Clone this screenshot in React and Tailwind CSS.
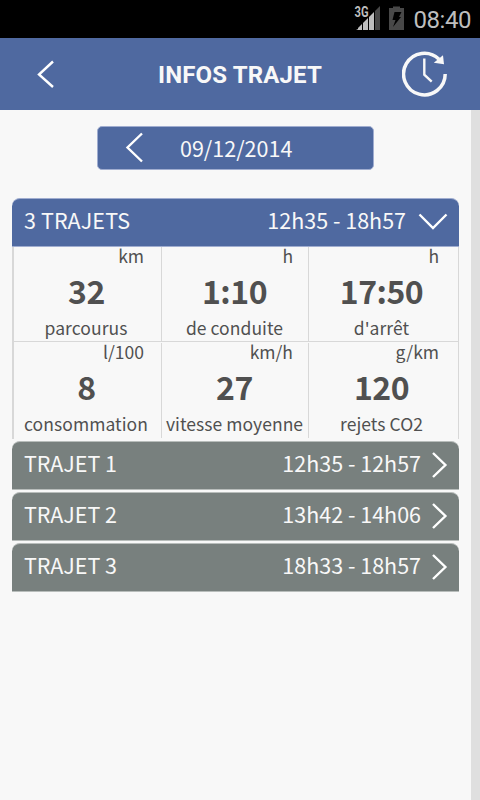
import React from "react";

const stats = [
  [
    { unit: "km", value: "32", label: "parcourus" },
    { unit: "h", value: "1:10", label: "de conduite" },
    { unit: "h", value: "17:50", label: "d'arrêt" },
  ],
  [
    { unit: "l/100", value: "8", label: "consommation" },
    { unit: "km/h", value: "27", label: "vitesse moyenne" },
    { unit: "g/km", value: "120", label: "rejets CO2" },
  ],
];

const trips = [
  { name: "TRAJET 1", time: "12h35 - 12h57" },
  { name: "TRAJET 2", time: "13h42 - 14h06" },
  { name: "TRAJET 3", time: "18h33 - 18h57" },
];

// Right padding of the unit, value and label in each column
const columns = [
  { unit: "pr-[17px]", value: "pr-[2px]", label: "pr-[3px]" },
  { unit: "pr-[15px]", value: "pr-px", label: "pr-px" },
  { unit: "pr-[19px]", value: "pr-1", label: "pr-1" },
];

const Chevron = ({ points, className, strokeWidth = 2.4 }) => (
  <svg className={className} fill="none" stroke="#fff" strokeWidth={strokeWidth}>
    <polyline points={points} />
  </svg>
);

const StatusBar = () => (
  <div className="flex h-[38px] justify-end bg-black pr-[9px] font-['Roboto',sans-serif]">
    {/* Signal strength */}
    <svg width="28" height="38" className="mr-[7px]">
      <path d="M26 6V30H21V11Z" fill="#484848" />
      <path d="M20 12V30H15V17Z" fill="#bebebe" />
      <path d="M14 18V30H9V23Z" fill="#bebebe" />
      <path d="M8 24V30H4V28Z" fill="#bebebe" />
      <path d="M4 29V30H2Z" fill="#bebebe" />
      <text x="0.5" y="17" fontSize="14" fontWeight="700" fill="#bebebe" textLength="14" lengthAdjust="spacingAndGlyphs">
        3G
      </text>
    </svg>
    {/* Battery */}
    <svg width="16" height="38" className="mr-[8px]">
      <path d="M0 8H4V6.5H11V8H15V30H0Z" fill="#484848" />
      <path d="M5.5 12H12.5L10 17H12L4 27L6.5 20H3.5Z" fill="#000" />
    </svg>
    <span className="text-[24px] leading-[40px] tracking-[-0.45px] text-[#bebebe]">08:40</span>
  </div>
);

const Header = () => (
  <div className="flex h-[72px] items-center bg-[#4f69a0] pr-[30px] pl-[36px]">
    <Chevron className="h-[30px] w-[20px]" points="17,2.5 3,15.5 17,28" />
    <h1 className="flex-1 pt-px pl-[22px] text-center font-['Roboto',sans-serif] text-[24px] leading-[72px] font-bold tracking-[0.15px] text-[#f8f8f8]">
      INFOS TRAJET
    </h1>
    <svg width="48" height="48" fill="none" stroke="#f8f8f8">
      <path d="M37 9.2A20.8 20.8 0 1 0 43.2 24" strokeWidth="3.5" />
      <path d="M41 5.3L42 14.3L31.8 12.7Z" fill="#f8f8f8" stroke="none" />
      <path d="M22.3 8.5V24.7L29.7 31.7" strokeWidth="2.4" />
    </svg>
  </div>
);

const StatCell = ({ unit, value, label, column }) => (
  <div className="flex h-[95px] flex-col text-[#505050]">
    <p className={`text-right text-[17.5px] leading-[18px] ${column.unit}`}>{unit}</p>
    <p className={`text-center text-[32px] leading-[50px] font-bold tracking-[-0.5px] ${column.value}`}>{value}</p>
    <p className={`text-center text-[17.5px] leading-[26px] tracking-[0.05px] whitespace-nowrap ${column.label}`}>
      {label}
    </p>
  </div>
);

const App = () => {
  return (
    <div className="flex h-[800px] w-[480px] flex-col overflow-hidden bg-[#f8f8f8] font-['Noto_Sans_CJK_JP',sans-serif]">
      <StatusBar />
      <Header />

      <div className="flex flex-1">
        <main className="w-[471px] pt-4 pr-3 pl-3">
          {/* Date picker */}
          <div className="ml-[85px] flex h-[44px] w-[277px] items-center rounded-[5px] border border-[#a0add0] bg-[#4f69a0] pl-[27px] text-[#f8f8f8]">
            <Chevron className="h-[32px] w-[20px]" points="17,1.5 2.5,15.5 17,29.5" />
            <span className="pl-[35px] text-[21.5px] leading-[42px]">09/12/2014</span>
          </div>

          {/* Summary */}
          <div className="mt-7 flex h-[49px] rounded-t-[8px] border-y border-[#a0add0] bg-[#4f69a0] pr-[10px] pl-3 text-[21.5px] leading-[42px] text-[#f8f8f8]">
            <span className="flex-1 tracking-[0.1px]">3 TRAJETS</span>
            <span>12h35 - 18h57</span>
            <Chevron className="mt-[13px] ml-[11px] h-[20px] w-[32px]" points="2.5,2.5 16,16 29.5,2.5" />
          </div>
          <div className="flex h-[192px] flex-col border-r border-l-2 border-[#d8d8d8]">
            {stats.map((row, i) => (
              <div
                key={i}
                className={`grid grid-cols-[148px_147px_149px] divide-x divide-[#d8d8d8] ${i === 0 ? "mb-px h-[95px] border-b border-[#d8d8d8]" : "h-[94px]"}`}
              >
                {row.map((stat, j) => (
                  <StatCell key={stat.label} {...stat} column={columns[j]} />
                ))}
              </div>
            ))}
          </div>

          {/* Trips */}
          <ul className="mt-[2px] flex flex-col gap-[2px]">
            {trips.map((trip) => (
              <li
                key={trip.name}
                className="flex h-[49px] rounded-t-[8px] border-y border-[#b8bdbb] bg-[#78807e] pr-[10px] pl-3 text-[21.5px] leading-[42px] text-[#f8f8f8]"
              >
                <span className="flex-1 tracking-[-0.05px]">{trip.name}</span>
                <span>{trip.time}</span>
                <Chevron className="mt-[9px] ml-[9px] h-[28px] w-[19px]" points="3,2 15.4,14 3,26" />
              </li>
            ))}
          </ul>
        </main>
        <div className="w-[9px] bg-[#dfdfdf]" />
      </div>
    </div>
  );
};

export default App;
